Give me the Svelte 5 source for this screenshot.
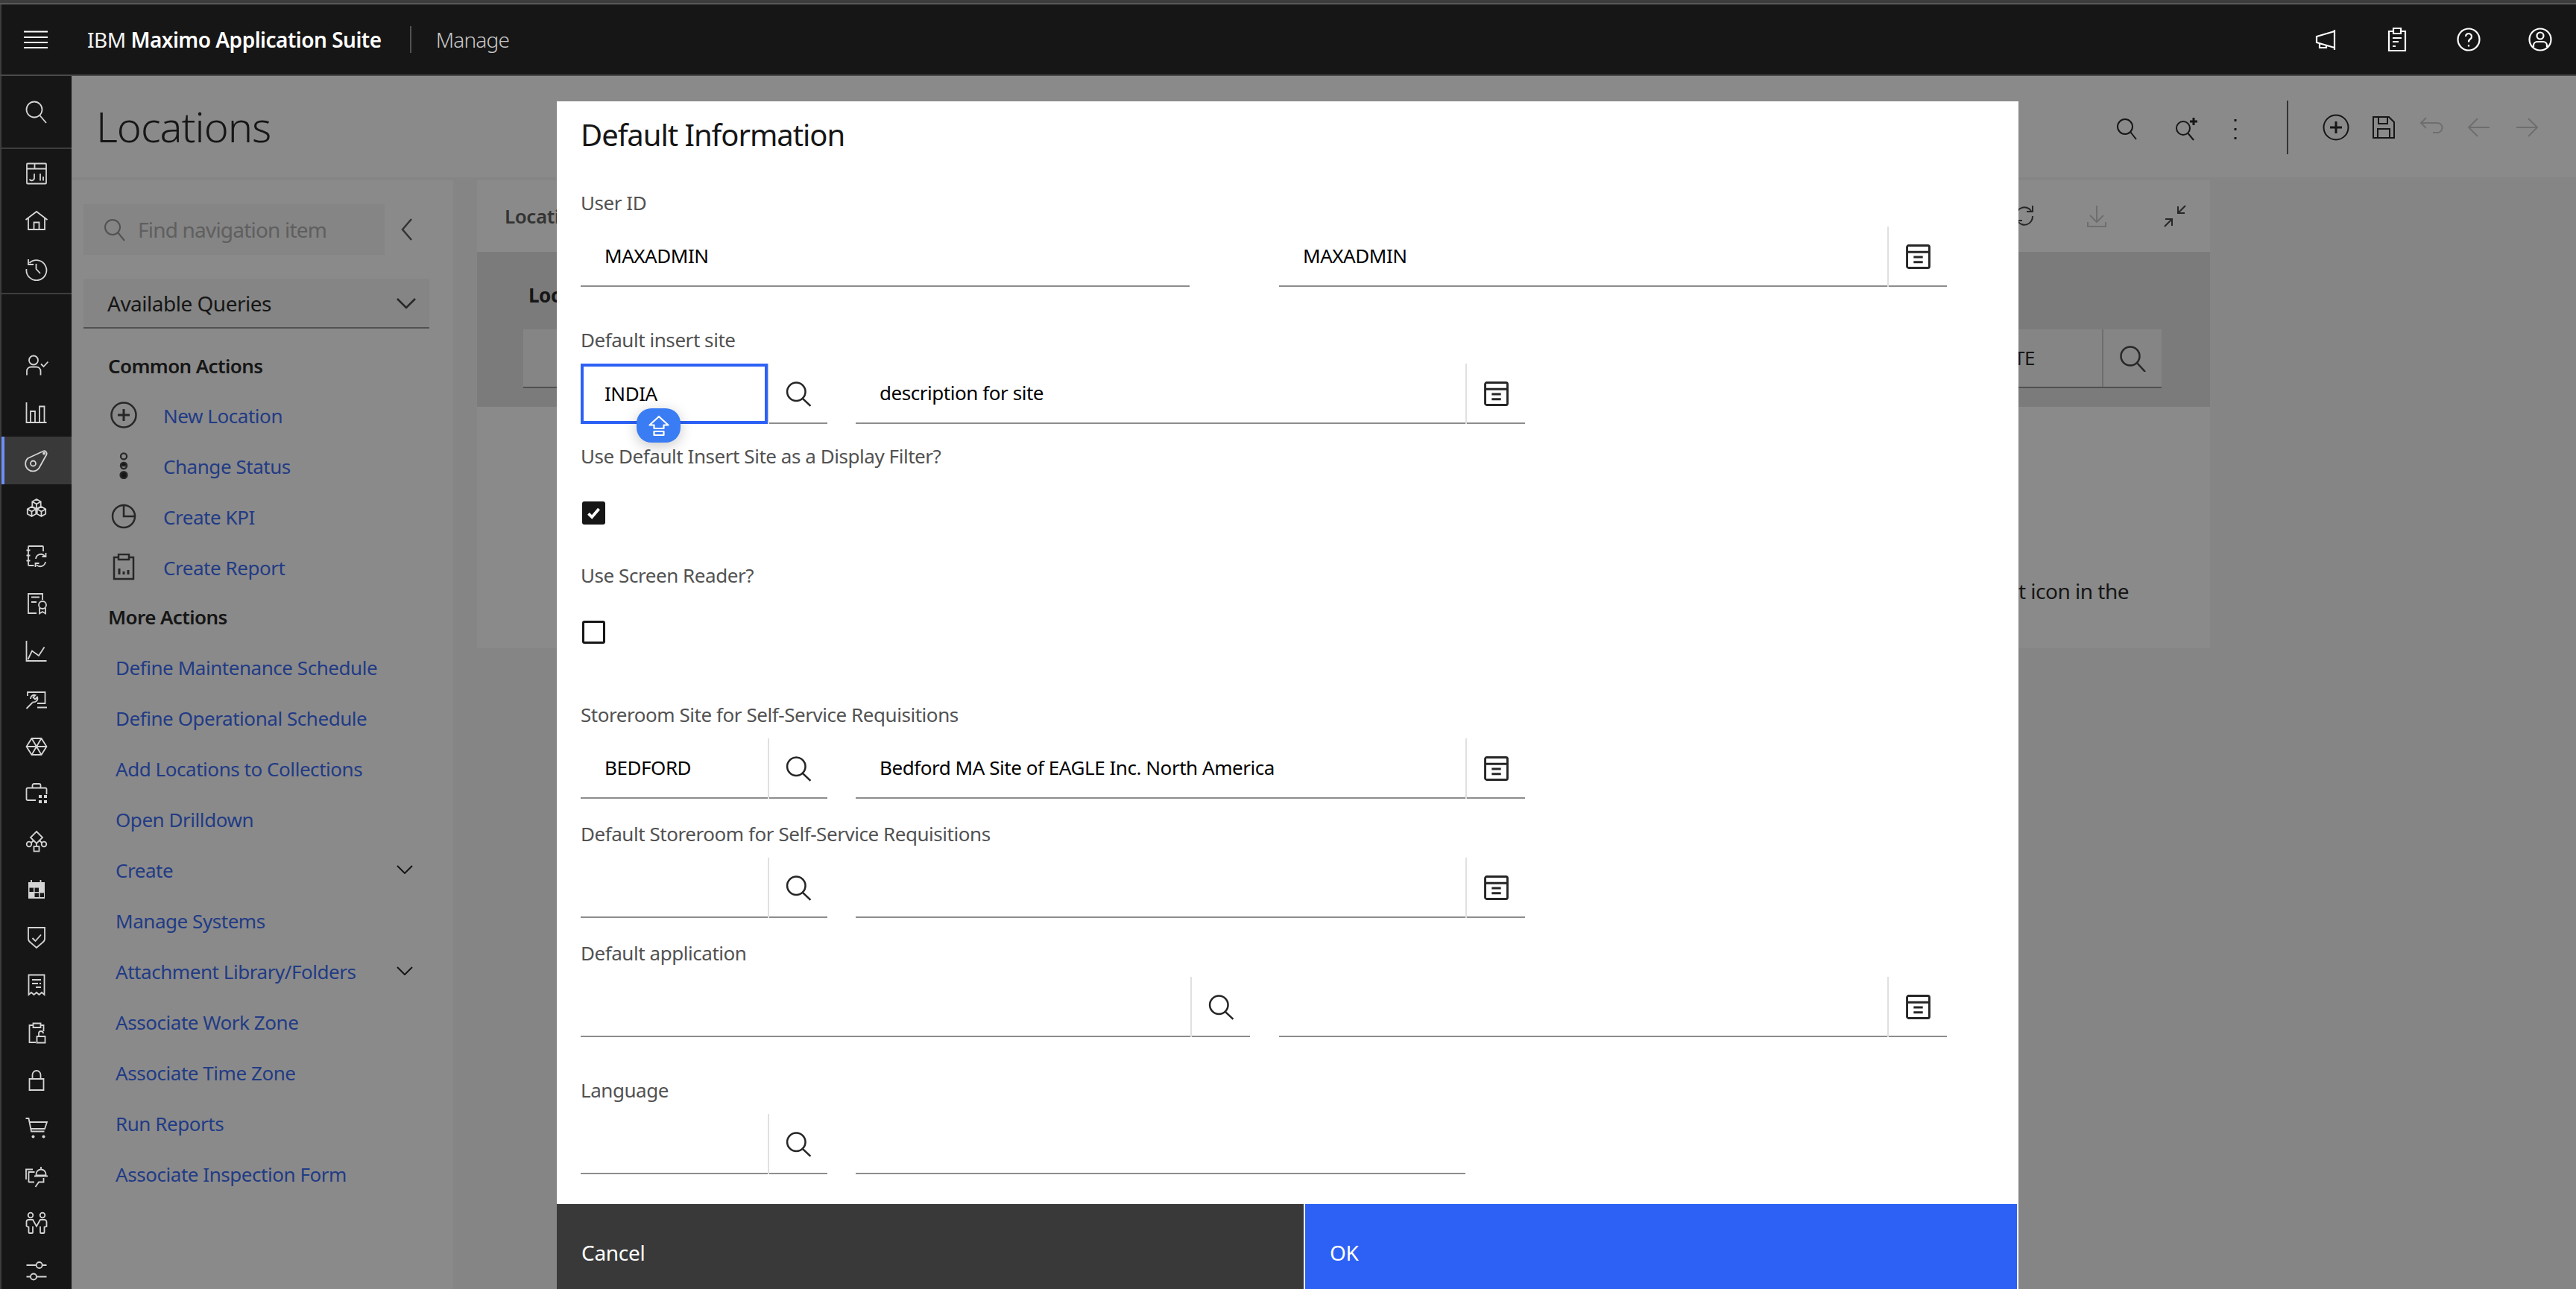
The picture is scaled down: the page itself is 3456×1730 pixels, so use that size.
<script>
  const commonActions = [
    { label: "New Location", icon: "plus" },
    { label: "Change Status", icon: "status" },
    { label: "Create KPI", icon: "kpi" },
    { label: "Create Report", icon: "report" }
  ];

  const moreActions = [
    { label: "Define Maintenance Schedule" },
    { label: "Define Operational Schedule" },
    { label: "Add Locations to Collections" },
    { label: "Open Drilldown" },
    { label: "Create", sub: true },
    { label: "Manage Systems" },
    { label: "Attachment Library/Folders", sub: true },
    { label: "Associate Work Zone" },
    { label: "Associate Time Zone" },
    { label: "Run Reports" },
    { label: "Associate Inspection Form" }
  ];

  const cube = `<path d="M0-6.500l5.700 3.200v6.600L0 6.500l-5.700-3.200v-6.600zM-5.700-3.300 0 0l5.700-3.300M0 0v6.500"/>`;

  // rail icons, drawn on a 32 box
  const railTop = [
    `<rect x="3" y="2.500" width="26" height="27" rx="1"/><path d="M3 9.500h26M13.500 2.500v7M21 16v9.500M25 20v5.500"/><path d="M13 16v5.500a3.500 3.500 0 0 1-6.500 2"/>`,
    `<path d="M1.500 14 16 3l14.500 11M5 12v15h22V12M12.500 27V17.500h7V27"/>`,
    `<path d="M5 3v7h7M6.500 8A13.500 13.500 0 1 1 2.500 16M15.500 9v7l5.500 6"/>`
  ];

  const railList = [
    { d: `<circle cx="12" cy="9.500" r="6"/><path d="M3 29.500V24a5.500 5.500 0 0 1 5.500-5.500h7.500a5.500 5.500 0 0 1 5.500 5.500v5.500M22 14.500l3.500 3.500 6-6.500"/>` },
    { d: `<path d="M2.500 2v27h27M8 29V14h6v15M20 29V7.500h6.500V29"/>` },
    { d: `<path d="M4.500 13 25 3.500a3.500 3.500 0 0 1 4.500 4.500L19.500 26A10 10 0 1 1 4.500 13z"/><circle cx="11.500" cy="20" r="3.500"/><circle cx="26" cy="6.500" r="1"/>`, active: true },
    { d: `<g transform="translate(16 10.500)">${cube}</g><g transform="translate(9.500 20.500)">${cube}</g><g transform="translate(22.500 20.500)">${cube}</g>` },
    { d: `<path d="M25 10V4a1 1 0 0 0-1-1H6a1 1 0 0 0-1 1v24a1 1 0 0 0 1 1h6.500M2.500 8.500h5M2.500 15.500h5M2.500 22.500h5M15 20a7 7 0 0 1 12-4M28.500 12v5h-5M28 24a7 7 0 0 1-12 4M14.500 31v-5h5"/>` },
    { d: `<path d="M24 11V3H5v26h11M9 7.500h11M9 14h7M20 22v7.500l4-2.500 4 2.500V22"/><circle cx="24" cy="18" r="5"/>` },
    { d: `<path d="M2.500 2v27h27M4.500 27 10 15.500l9 6.500 7.500-11.500"/>` },
    { d: `<path d="M4 12V7h23.500v15H17M17 27.500h13M2.500 29l8-8M8 16a5 5 0 0 1 6.500-5l-3 3 2.500 2.500 3-3a5 5 0 0 1-6.500 6.500"/>` },
    { d: `<path d="M9.500 5h13l7 11-7 11h-13l-7-11zM9.500 5l13 22M22.500 5l-13 22M2.500 16h27"/>` },
    { d: `<path d="M15 24H4a1.500 1.500 0 0 1-1.500-1.500V9A1.500 1.500 0 0 1 4 7.500h24A1.500 1.500 0 0 1 29.500 9v7M10.500 7.500V4a2 2 0 0 1 2-2h7a2 2 0 0 1 2 2v3.500"/><path class="solid" d="M19 17h4v4h-4zM26 17h4v4h-4zM19 24h4v4h-4zM26 24h4v4h-4z"/>` },
    { d: `<path d="M16 2l8 8-8 8-8-8zM16 18v4M9 17l3-3M23 17l-3-3"/><circle cx="6" cy="19" r="3.300"/><circle cx="26" cy="19" r="3.300"/><rect x="12.500" y="22" width="7" height="6.500"/>` },
    { d: `<path class="solid" d="M5 6h22v22H5z"/><path class="cut" d="M6.500 13.500H12V19H6.500zM13.500 13.500H19V19h-5.500zM13.500 20.500H19V26h-5.500zM20.500 20.500H26V26h-5.500z"/><path d="M9 3v4M21.500 3v4"/>` },
    { d: `<path d="M5 3h22v15a6 6 0 0 1-3 5l-8 7-8-7a6 6 0 0 1-3-5zM10.500 17l4 4 7.500-8.500"/>` },
    { d: `<path d="M5.500 29V2.500h21V29l-3.500-3-3.500 3-3.500-3-3.500 3-3.500-3zM10 9h12M10 14h8M20 14h2M15 19h7"/>` },
    { d: `<path d="M11.500 6H6.500v23H15M21 6h4.500v8M11.500 3.500h10V9h-10zM16.500 21h11v8.500h-11zM19 21v-4a3 3 0 0 1 6 0"/>` },
    { d: `<path d="M6.500 14h19v15h-19zM10.500 14V8.500a5.500 5.500 0 0 1 11 0V14"/>` },
    { d: `<path d="M1.500 3h4l3.500 17.500h17.500M6.500 8H30l-3 9H8.500"/><circle class="solid" cx="11.500" cy="27.500" r="2"/><circle class="solid" cx="25.500" cy="27.500" r="2"/>` },
    { d: `<path d="M2 21V7.500h9M5.500 25V11h8M5.500 24.500H13M25.500 19v5.500H19L14.500 31M15.500 14a6.500 6.500 0 0 1 13 0v1.500h-13zM13 16.500h18M22 4v3"/>` },
    { d: `<circle cx="8" cy="5" r="3.300"/><circle cx="24" cy="5" r="3.300"/><path d="M2.500 20v-6a3 3 0 0 1 3-3h5.500l5 9 5-9h5.500a3 3 0 0 1 3 3v6l-3 1v7a1 1 0 0 1-1 1h-3.500a1 1 0 0 1-1-1v-8M2.500 20l3 1v7a1 1 0 0 0 1 1h3.500a1 1 0 0 0 1-1v-8"/>` },
    { d: `<path d="M2.500 8h13M24 8h5.500M2.500 23.500h5.500M16 23.500h13.500"/><circle cx="19.700" cy="8" r="4"/><circle cx="12" cy="23.500" r="4"/>` }
  ];

  const rows = [
    {
      label: "User ID", cls: "first",
      fields: [
        { width: 817, value: "MAXADMIN" },
        { width: 896, value: "MAXADMIN", detail: true, gap: 120 }
      ]
    },
    {
      label: "Default insert site", cls: "wide",
      fields: [
        { width: 331, value: "INDIA", lookup: true, focus: true },
        { width: 898, value: "description for site", detail: true, gap: 38 }
      ]
    }
  ];

  const lowerRows = [
    {
      label: "Storeroom Site for Self-Service Requisitions", cls: "after-checks",
      fields: [
        { width: 331, value: "BEDFORD", lookup: true },
        { width: 898, value: "Bedford MA Site of EAGLE Inc. North America", detail: true, gap: 38 }
      ]
    },
    {
      label: "Default Storeroom for Self-Service Requisitions",
      fields: [
        { width: 331, value: "", lookup: true },
        { width: 898, value: "", detail: true, gap: 38 }
      ]
    },
    {
      label: "Default application",
      fields: [
        { width: 898, value: "", lookup: true },
        { width: 896, value: "", detail: true, gap: 39 }
      ]
    },
    {
      label: "Language", cls: "wide",
      fields: [
        { width: 331, value: "", lookup: true },
        { width: 818, value: "", gap: 38 }
      ]
    }
  ];
</script>

{#snippet searchIcon()}
  <svg class="ic" viewBox="0 0 32 32"><circle cx="13" cy="13" r="11.500"/><path d="M21 21.500 31 31"/></svg>
{/snippet}

{#snippet fieldRow(row)}
  <div class="field {row.cls ?? ''}">
    <div class="flabel">{row.label}</div>
    <div class="frow">
      {#each row.fields as f}
        <div class="fbox" style="width:{f.width}px;margin-left:{f.gap ?? 0}px">
          <div class="fval" class:focus={f.focus}>
            {f.value}
            {#if f.focus}
              <span class="shift">
                <svg viewBox="0 0 32 32"><path d="M16 4 3.500 15.500h6V20h13v-4.500h6zM9.500 24h13v5h-13z"/></svg>
              </span>
            {/if}
          </div>
          {#if f.lookup}
            <div class="fbtn">{@render searchIcon()}</div>
          {/if}
          {#if f.detail}
            <div class="fbtn">
              <svg class="detail" viewBox="0 0 32 32">
                <rect x="1.500" y="1.500" width="29" height="29" rx="2"/>
                <path d="M1.500 10h29M10 16.500h12M10 23h12"/>
              </svg>
            </div>
          {/if}
        </div>
      {/each}
    </div>
  </div>
{/snippet}

<div class="app">
  <div class="strip"></div>
  <header class="topbar">
    <svg class="burger" viewBox="0 0 32 24"><path d="M0 1.500h32M0 9h32M0 16h32M0 23h32"/></svg>
    <div class="brand">IBM <b>Maximo Application Suite</b></div>
    <div class="appname">Manage</div>
    <div class="top-icons">
      <svg viewBox="0 0 32 32"><path d="M28 3v27M28 5 4 12v8l24 7M8 21v6h9v-3"/></svg>
      <svg viewBox="0 0 32 32"><path d="M11 5H5v26h22V5h-6M11 1h10v7H11zM10 14h12M10 19h8M10 25h4"/></svg>
      <svg viewBox="0 0 32 32"><circle cx="16" cy="16" r="14.500"/><path d="M12 12a4 4 0 1 1 6 3.500c-1.500 1-2 1.500-2 4M16 23v2.500"/></svg>
      <svg viewBox="0 0 32 32"><circle cx="16" cy="16" r="14.500"/><circle cx="16" cy="11" r="4.500"/><path d="M7 26v-2a5 5 0 0 1 5-5h8a5 5 0 0 1 5 5v2"/></svg>
    </div>
  </header>

  <div class="body">
    <nav class="rail">
      <div class="rail-search">
        <svg viewBox="0 0 32 32"><circle cx="13" cy="13" r="10.500"/><path d="M20.500 21 29 31"/></svg>
      </div>
      <div class="rail-group">
        {#each railTop as d}
          <div class="rail-item short"><svg viewBox="0 0 32 32">{@html d}</svg></div>
        {/each}
      </div>
      <div class="rail-list">
        {#each railList as item}
          <div class="rail-item" class:active={item.active}><svg viewBox="0 0 32 32">{@html item.d}</svg></div>
        {/each}
      </div>
    </nav>

    <main class="main">
      <div class="pagehead">
        <h1>Locations</h1>
        <div class="head-tools">
          <svg class="t s" viewBox="0 0 32 32"><circle cx="13" cy="13" r="10"/><path d="M20.500 20.500 28 30"/></svg>
          <svg class="t q" viewBox="0 0 32 32"><circle cx="12" cy="15" r="9"/><path d="M18.500 22 26 31"/><path class="fat" d="M26 1v10M21 6h10"/></svg>
          <svg class="t kebab" viewBox="0 0 6 32"><path class="fat" d="M3 3v3M3 15v3M3 27v3"/></svg>
          <div class="tool-sep"></div>
          <svg class="t plus" viewBox="0 0 36 36"><circle cx="18" cy="18" r="16.500"/><path class="fat" d="M18 10v16M10 18h16"/></svg>
          <svg class="t save" viewBox="0 0 32 32"><path d="M2 2h21l7 7v21H2zM9 2v9h12V2M8 30V18h16v12"/></svg>
          <svg class="t off" viewBox="0 0 32 32"><path d="M2 10h22a6 6 0 0 1 0 13h-6M9 3 2 10l7 7"/></svg>
          <svg class="t off" viewBox="0 0 32 32"><path d="M30 16H3M14 4 2 16l12 12"/></svg>
          <svg class="t off" viewBox="0 0 32 32"><path d="M2 16h27M18 4l12 12-12 12"/></svg>
        </div>
      </div>

      <div class="workspace">
        <aside class="sidenav">
          <div class="nav-top">
            <div class="nav-search">
              <svg viewBox="0 0 32 32"><circle cx="13" cy="13" r="10"/><path d="M20.500 20.500 29 31"/></svg>
              <span>Find navigation item</span>
            </div>
            <svg class="collapse" viewBox="0 0 16 32"><path d="M14 2 2 16l12 14"/></svg>
          </div>
          <div class="queries">
            <span>Available Queries</span>
            <svg viewBox="0 0 28 16"><path d="M2 2l12 12L26 2"/></svg>
          </div>
          <div class="nav-head">Common Actions</div>
          {#each commonActions as a}
            <div class="common">
              <span class="common-ic">
                {#if a.icon === "plus"}
                  <svg viewBox="0 0 36 36"><circle cx="18" cy="18" r="16.500"/><path class="fat" d="M18 10v16M10 18h16"/></svg>
                {:else if a.icon === "status"}
                  <svg viewBox="0 0 36 40"><circle cx="18" cy="6" r="4.500"/><circle cx="18" cy="20" r="4.500"/><path class="solid" d="M13.500 20a4.500 4.500 0 0 1 9 0z"/><circle class="solid" cx="18" cy="34" r="5"/></svg>
                {:else if a.icon === "kpi"}
                  <svg viewBox="0 0 36 36"><path d="M18 3a15 15 0 1 0 15 15H18z"/><path d="M18 3a15 15 0 0 1 15 15"/></svg>
                {:else}
                  <svg viewBox="0 0 36 36"><path d="M11 5H5v29h26V5h-6M11 1h14v7H11z"/><path class="fat" d="M12 28v-8M18 28v-4M24 28v-6"/></svg>
                {/if}
              </span>
              <a href="#top">{a.label}</a>
            </div>
          {/each}
          <div class="nav-head more">More Actions</div>
          {#each moreActions as a}
            <div class="more-item">
              <a href="#top">{a.label}</a>
              {#if a.sub}
                <svg viewBox="0 0 22 12"><path d="M1 1l10 10L21 1"/></svg>
              {/if}
            </div>
          {/each}
        </aside>

        <section class="panel">
          <div class="panel-head">
            <span>Locations</span>
            <div class="panel-tools">
              <svg class="t" viewBox="0 0 32 32"><path d="M5 16A11 11 0 0 1 25 9M27 2v8h-8M27 16A11 11 0 0 1 7 23M5 30v-8h8"/></svg>
              <svg class="t off dl" viewBox="0 0 32 32"><path d="M16 2v22M7 15l9 9 9-9M4 24v6h24v-6"/></svg>
              <svg class="t" viewBox="0 0 32 32"><path d="M20 12 30 2M20 3v9h9M12 20 2 30M3 20h9v9"/></svg>
            </div>
          </div>
          <div class="filter">
            <div class="filter-title">Locations</div>
            <div class="filter-input">
              <div class="filter-val">SITE</div>
              <div class="filter-btn">
                <svg viewBox="0 0 36 36"><circle cx="15" cy="15" r="12.500"/><path d="M24 24l11 12"/></svg>
              </div>
            </div>
          </div>
          <p class="empty">To add a record, select the insert icon in the</p>
        </section>
      </div>

      <div class="scrim"></div>

      <div class="modal">
        <div class="modal-body">
          <h2>Default Information</h2>
          {#each rows as row}
            {@render fieldRow(row)}
          {/each}

          <div class="flabel check-label first-check">Use Default Insert Site as a Display Filter?</div>
          <div class="check on">
            <svg viewBox="0 0 16 16"><path d="M3.500 8.500l3 3 6-7"/></svg>
          </div>
          <div class="flabel check-label">Use Screen Reader?</div>
          <div class="check"></div>

          {#each lowerRows as row}
            {@render fieldRow(row)}
          {/each}
        </div>
        <footer class="modal-foot">
          <button class="cancel">Cancel</button>
          <button class="ok">OK</button>
        </footer>
      </div>
    </main>
  </div>
</div>

<style>
  :global(body) {
    margin: 0;
    background: #3d3d3d;
  }

  .app {
    width: 3456px;
    height: 1730px;
    overflow: hidden;
    display: flex;
    flex-direction: column;
    font-family: "Noto Sans", sans-serif;
    font-size: 26px;
    letter-spacing: -0.45px;
    color: #161616;
    background: #3d3d3d;
  }

  svg {
    display: block;
    fill: none;
    stroke: currentColor;
  }

  .strip {
    height: 4px;
    background: #3d3d3d;
    border-bottom: 2px solid #595959;
  }

  .topbar {
    height: 94px;
    background: #161616;
    border-bottom: 2px solid #4a4a4a;
    box-shadow: inset 2px 0 0 #3d3d3d;
    display: flex;
    align-items: center;
    color: #f4f4f4;
    padding-left: 32px;
  }

  .burger {
    width: 32px;
    height: 24px;
    stroke-width: 2;
    color: #fff;
  }

  .brand {
    margin-left: 53px;
    font-size: 28px;
    letter-spacing: -0.5px;
    padding-right: 38px;
    border-right: 2px solid #525252;
    line-height: 36px;
  }

  .brand b {
    font-weight: 600;
    color: #fff;
  }

  .appname {
    margin-left: 33px;
    font-size: 28px;
    letter-spacing: -0.8px;
    color: #c6c6c6;
    font-weight: 300;
  }

  .top-icons {
    margin-left: auto;
    display: flex;
    gap: 64px;
    padding-right: 32px;
    color: #fff;
  }

  .top-icons svg {
    width: 32px;
    height: 32px;
    stroke-width: 2.200;
  }

  .body {
    flex: 1;
    display: flex;
    min-height: 0;
    padding-left: 2px;
  }

  .rail {
    width: 94px;
    flex: none;
    background: #161616;
    color: #d4d4d4;
    display: flex;
    flex-direction: column;
    overflow: hidden;
  }

  .rail svg {
    width: 32px;
    height: 32px;
    stroke-width: 1.800;
  }

  .rail :global(.solid) {
    fill: currentColor;
    stroke: none;
  }

  .rail :global(.cut) {
    fill: #161616;
    stroke: none;
  }

  .rail-search {
    height: 96px;
    flex: none;
    display: flex;
    align-items: center;
    justify-content: center;
    border-bottom: 2px solid #3d3d3d;
  }

  .rail-group {
    height: 193px;
    flex: none;
    display: flex;
    flex-direction: column;
    justify-content: center;
    border-bottom: 2px solid #3d3d3d;
  }

  .rail-item {
    height: 64px;
    display: flex;
    align-items: center;
    justify-content: center;
    flex: none;
  }

  .rail-list {
    flex: none;
    padding-top: 63px;
  }

  .rail-item.active {
    background: #393939;
    box-shadow: inset 4px 0 0 #6d8ef9;
  }

  .main {
    flex: 1;
    min-width: 0;
    position: relative;
    background: #f4f4f4;
    display: flex;
    flex-direction: column;
  }

  .pagehead {
    height: 136px;
    background: #fff;
    display: flex;
    flex: none;
  }

  h1 {
    margin: 0;
    padding: 31px 0 0 33px;
    font-size: 56px;
    line-height: 72px;
    font-weight: 300;
    letter-spacing: -1px;
  }

  .head-tools {
    margin-left: auto;
    display: flex;
    align-items: center;
    padding: 2px 50px 0 0;
  }

  .t {
    width: 32px;
    height: 32px;
    stroke-width: 2;
    margin-left: 32px;
    flex: none;
  }

  .fat {
    stroke-width: 3;
  }

  .q,
  .kebab {
    margin-left: 47px;
  }

  .s,
  .q,
  .kebab {
    position: relative;
    top: 2px;
  }

  .kebab {
    width: 6px;
  }

  .tool-sep {
    width: 2px;
    height: 72px;
    background: #525252;
    margin-left: 66px;
  }

  .plus {
    width: 36px;
    height: 36px;
    margin-left: 46px;
  }

  .save {
    margin-left: 30px;
  }

  .off {
    color: #c6c6c6;
  }

  .workspace {
    flex: 1;
    min-height: 0;
    padding-top: 4px;
    display: flex;
    gap: 32px;
    align-items: flex-start;
  }

  .sidenav {
    width: 512px;
    height: 100%;
    background: #fff;
    flex: none;
    padding: 32px 0 0 16px;
    box-sizing: border-box;
  }

  .nav-top {
    display: flex;
    align-items: center;
    height: 68px;
  }

  .nav-search {
    width: 404px;
    height: 68px;
    background: #f4f4f4;
    display: flex;
    align-items: center;
    color: #a8a8a8;
    font-size: 28px;
    letter-spacing: -0.8px;
  }

  .nav-search svg {
    width: 32px;
    height: 32px;
    stroke-width: 2;
    margin-left: 26px;
    margin-right: 15px;
    color: #8d8d8d;
  }

  .collapse {
    width: 16px;
    height: 32px;
    stroke-width: 2.500;
    margin-left: 22px;
    color: #525252;
  }

  .queries {
    margin-top: 32px;
    width: 464px;
    height: 65px;
    background: #f4f4f4;
    border-bottom: 2px solid #8d8d8d;
    display: flex;
    align-items: center;
    justify-content: space-between;
    font-size: 28px;
    letter-spacing: -0.5px;
  }

  .queries span {
    margin-left: 32px;
  }

  .queries svg {
    width: 28px;
    height: 16px;
    stroke-width: 2.500;
    margin-right: 17px;
    color: #393939;
  }

  .nav-head {
    margin: 32px 0 0 33px;
    font-size: 26px;
    font-weight: 600;
    line-height: 36px;
    letter-spacing: -0.6px;
  }

  .nav-head.more {
    margin-top: 15px;
  }

  .common {
    height: 68px;
    display: flex;
    align-items: center;
    margin-left: 36px;
  }

  .nav-head + .common {
    margin-top: 14px;
  }

  .common-ic {
    width: 36px;
    margin-right: 35px;
    display: flex;
    justify-content: center;
  }

  .common-ic svg {
    width: 36px;
    height: 36px;
    stroke-width: 2.500;
    color: #393939;
  }

  .common-ic :global(.solid) {
    fill: #161616;
  }

  a {
    color: #2d61f5;
    text-decoration: none;
    font-size: 26px;
    line-height: 36px;
    padding-top: 2px;
  }

  .more-item {
    height: 68px;
    display: flex;
    align-items: center;
    justify-content: space-between;
    margin-left: 43px;
    padding-right: 54px;
  }

  .nav-head.more + .more-item {
    margin-top: 15px;
  }

  .more-item svg {
    width: 22px;
    height: 12px;
    stroke-width: 2;
  }

  .panel {
    width: 2325px;
    height: 628px;
    background: #fff;
    flex: none;
  }

  .panel-head {
    height: 96px;
    display: flex;
    align-items: center;
    padding-left: 37px;
    color: #525252;
    font-weight: 600;
    font-size: 26px;
  }

  .panel-tools {
    margin-left: auto;
    display: flex;
    padding-right: 31px;
  }

  .panel-tools .t {
    margin: 0;
    color: #393939;
  }

  .panel-tools .dl {
    color: #c6c6c6;
    margin: 0 73px 0 65px;
  }

  .filter {
    height: 208px;
    background: #e0e0e0;
    padding: 40px 65px 0 62px;
    box-sizing: border-box;
  }

  .filter-title {
    font-weight: 700;
    font-size: 26px;
    line-height: 36px;
    padding-left: 7px;
  }

  .filter-input {
    margin-top: 28px;
    height: 77px;
    display: flex;
    background: #f4f4f4;
    border-bottom: 2px solid #8d8d8d;
  }

  .filter-val {
    flex: 1;
    text-align: right;
    line-height: 77px;
    padding-right: 90px;
    font-size: 26px;
    border-right: 2px solid #c6c6c6;
  }

  .filter-btn {
    width: 78px;
    display: flex;
    align-items: center;
    justify-content: center;
  }

  .filter-btn svg {
    width: 36px;
    height: 36px;
    stroke-width: 2.500;
    color: #393939;
  }

  .empty {
    margin: 229px 109px 0 0;
    text-align: right;
    font-size: 28px;
    line-height: 36px;
    letter-spacing: -0.5px;
  }

  .scrim {
    position: absolute;
    inset: 0;
    background: rgba(22, 22, 22, 0.5);
  }

  .modal {
    position: absolute;
    left: 651px;
    top: 34px;
    bottom: 0;
    width: 1961px;
    background: #fff;
    display: flex;
    flex-direction: column;
    color: #000;
  }

  .modal-body {
    flex: 1;
    min-height: 0;
    padding: 19px 0 0 32px;
  }

  h2 {
    margin: 0;
    font-size: 40px;
    line-height: 52px;
    font-weight: 400;
    letter-spacing: -1.05px;
    color: #161616;
  }

  .flabel {
    font-size: 26px;
    line-height: 36px;
    color: #525252;
  }

  .field {
    margin-top: 29px;
  }

  .field.first {
    margin-top: 47px;
  }

  .field.wide {
    margin-top: 53px;
  }

  .field.after-checks {
    margin-top: 77px;
  }

  .frow {
    display: flex;
    margin-top: 14px;
  }

  .fbox {
    height: 79px;
    border-bottom: 2px solid #8d8d8d;
    display: flex;
    flex: none;
  }

  .fval {
    flex: 1;
    display: flex;
    align-items: center;
    padding: 0 0 2px 32px;
    position: relative;
    color: #000;
  }

  .fval.focus {
    box-shadow: inset 0 0 0 4px #2d61f5;
    margin-bottom: -2px;
  }

  .shift {
    position: absolute;
    left: 75px;
    top: 60px;
    width: 59px;
    height: 46px;
    border-radius: 20px;
    background: #3a7cf3;
    box-shadow: 0 4px 18px rgba(0, 0, 0, 0.22);
    display: flex;
    align-items: center;
    justify-content: center;
    color: #fff;
  }

  .shift svg {
    width: 32px;
    height: 32px;
    stroke-width: 2.200;
    stroke-linejoin: round;
  }

  .fbtn {
    width: 78px;
    flex: none;
    border-left: 2px solid #e0e0e0;
    display: flex;
    align-items: center;
    justify-content: center;
    margin-bottom: -2px;
  }

  .ic {
    width: 35px;
    height: 34px;
    stroke-width: 2.400;
    color: #262626;
  }

  .detail {
    width: 33px;
    height: 33px;
    stroke-width: 2.800;
    color: #262626;
  }

  .check-label {
    margin-top: 43px;
  }

  .first-check {
    margin-top: 25px;
  }

  .check {
    width: 31px;
    height: 31px;
    box-sizing: border-box;
    margin: 43px 0 0 2px;
    border: 3px solid #161616;
    border-radius: 3px;
  }

  .check.on {
    background: #161616;
    color: #fff;
  }

  .check + .check-label {
    margin-top: 50px;
  }

  .check svg {
    stroke-width: 2.500;
    width: 25px;
    height: 25px;
  }

  .modal-foot {
    height: 114px;
    display: flex;
    flex: none;
    gap: 2px;
    padding-right: 2px;
  }

  button {
    border: 0;
    font: inherit;
    font-size: 28px;
    letter-spacing: -0.3px;
    color: #fff;
    text-align: left;
    padding: 16px 0 0 33px;
    display: block;
  }

  .cancel {
    width: 1002px;
    background: #393939;
  }

  .ok {
    flex: 1;
    background: #2d61f5;
  }
</style>
